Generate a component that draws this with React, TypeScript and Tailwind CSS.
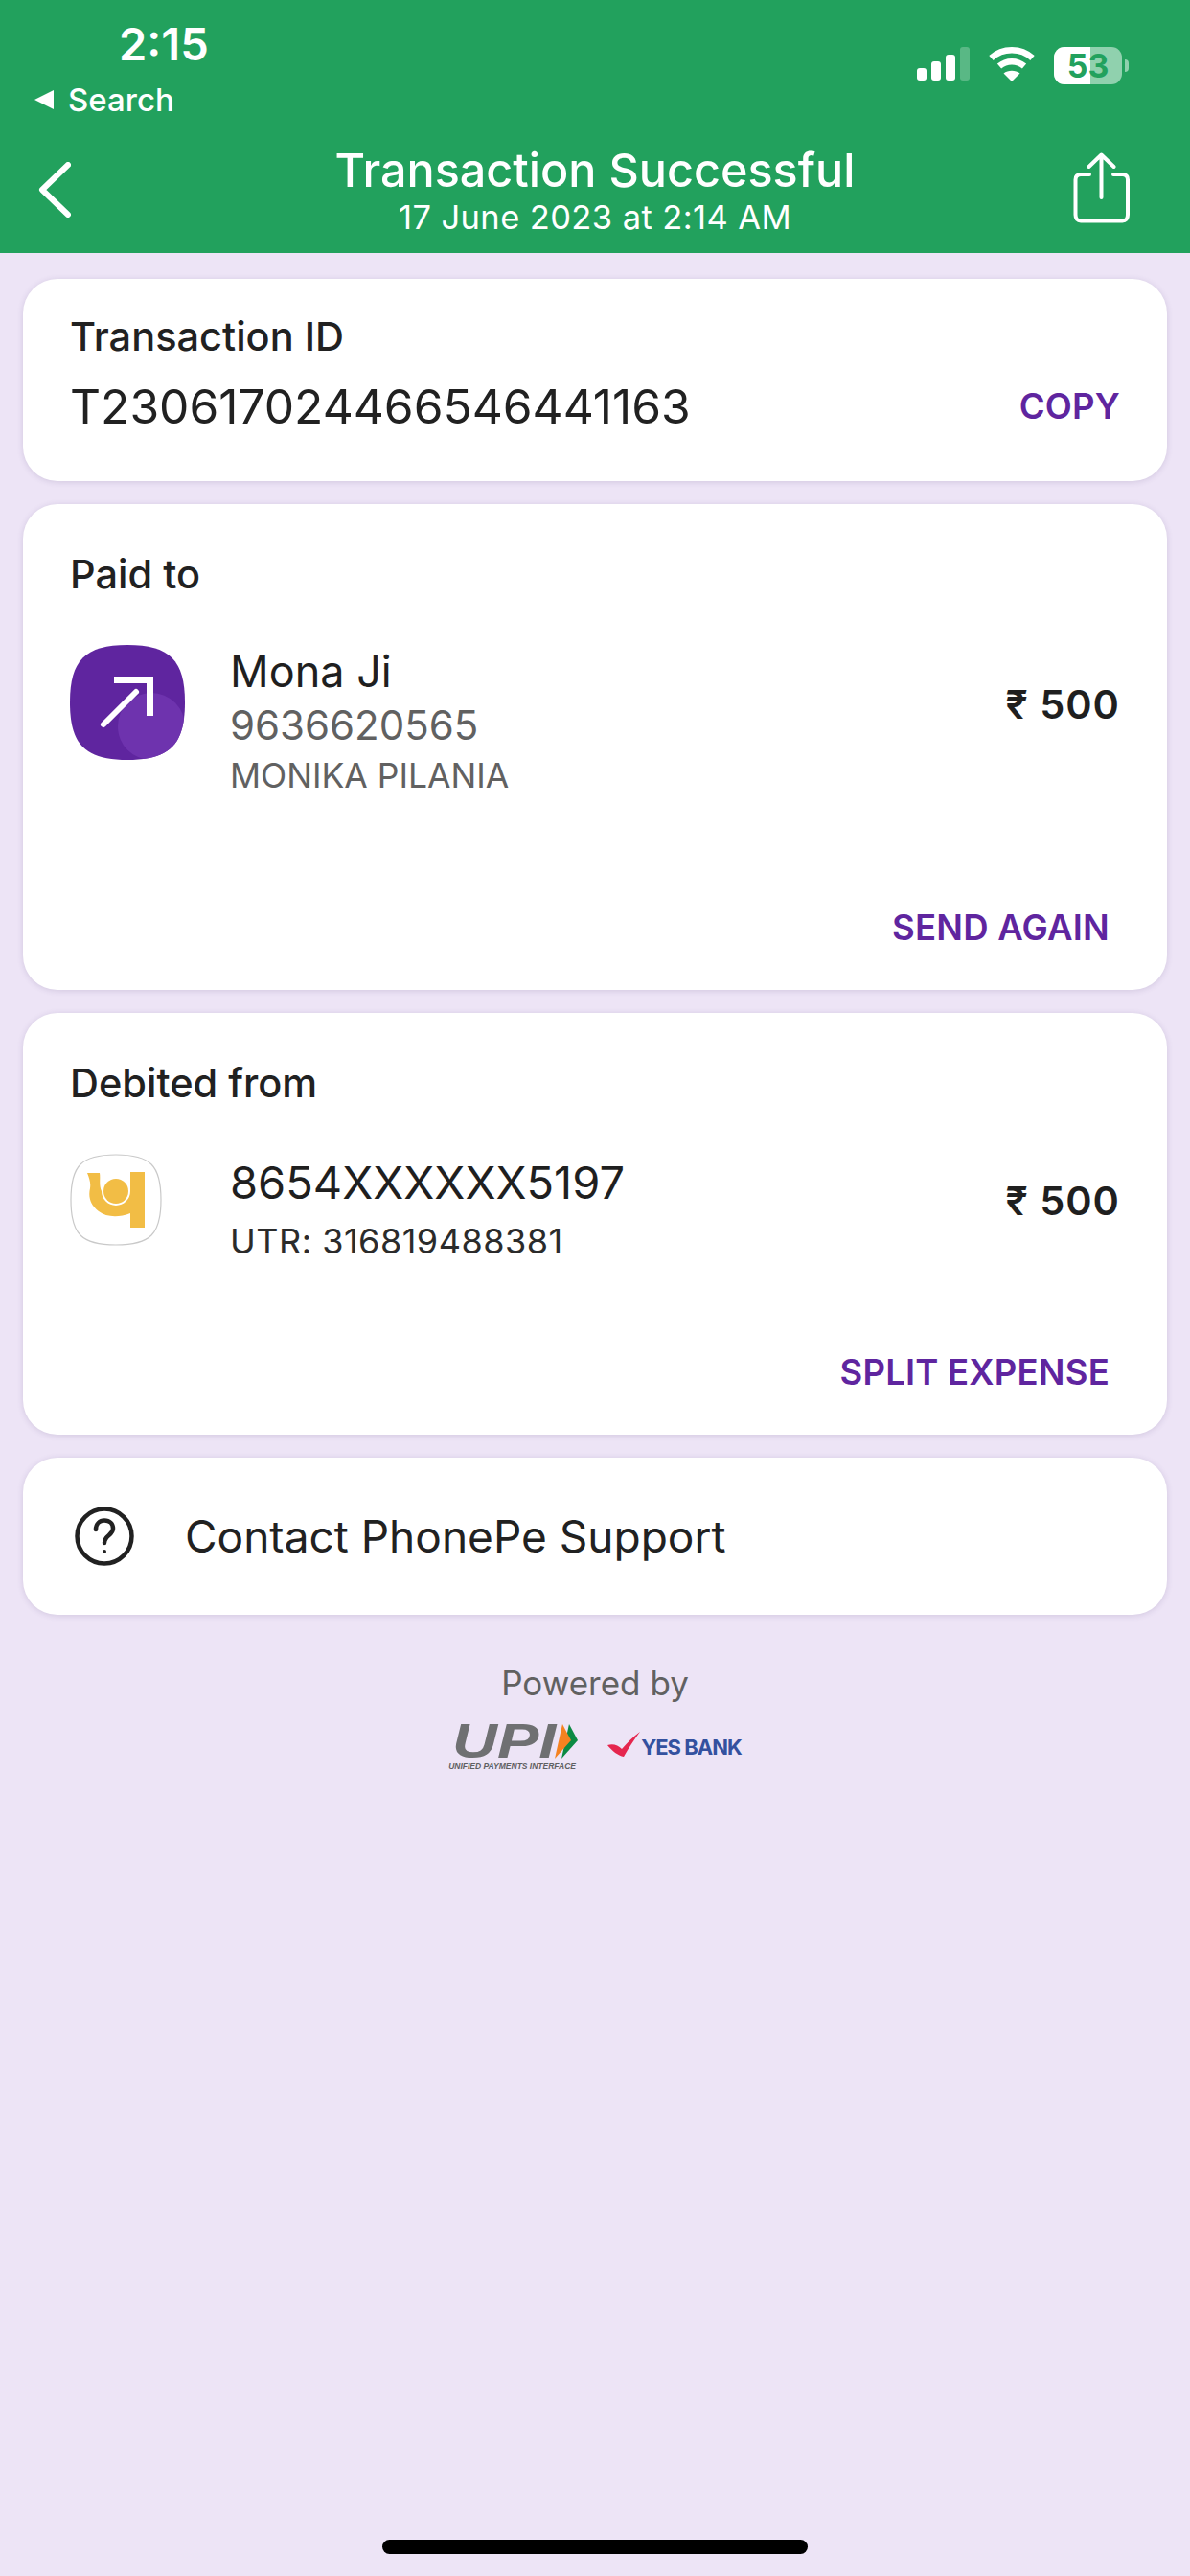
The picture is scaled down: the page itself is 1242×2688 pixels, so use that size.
import React from 'react';

const Card = ({ className = '', children }: { className?: string; children: React.ReactNode }) => (
  <div className={`bg-white rounded-[36px] shadow-[0_1px_6px_rgba(70,50,110,0.16)] ${className}`}>{children}</div>
);

const CardTitle = ({ label }: { label: string }) => (
  <div className="text-[41.500px] leading-[46px] font-medium text-[#212121]">{label}</div>
);

const ActionLink = ({ label }: { label: string }) => (
  <span className="text-[36.500px] leading-[44px] font-semibold tracking-[0.2px] text-[#5f259f]">{label}</span>
);

const Amount = () => (
  <span className="text-[41.500px] leading-[50px] font-semibold tracking-[1px] text-[#1f1f1f]">₹ 500</span>
);

// Status bar icons
const Signal = () => (
  <svg width="55" height="35" viewBox="0 0 55 35" fill="#fff">
    <rect x="0" y="22" width="10" height="13" rx="3" />
    <rect x="15" y="15" width="10" height="20" rx="3" />
    <rect x="30" y="8" width="10" height="27" rx="3" />
    <rect x="45" y="0" width="10" height="35" rx="3" opacity="0.25" />
  </svg>
);

const Wifi = () => (
  <svg width="48" height="36" viewBox="0 0 48 36" fill="none" stroke="#fff" strokeWidth="6.5">
    <path d="M2.5 11.5C14.5 0.5 33.5 0.5 45.5 11.5" />
    <path d="M11 20C18.5 13.5 29.5 13.5 37 20" />
    <path d="M24 36L15.5 27.5C20 23.8 28 23.8 32.5 27.5Z" fill="#fff" stroke="none" />
  </svg>
);

const Battery = () => (
  <div className="flex items-center gap-[3px]">
    <div className="relative w-[71px] h-[39px] rounded-[11px] bg-[#90d1ae] overflow-hidden">
      <div className="absolute inset-y-0 left-0 w-[38px] bg-white" />
      <span className="absolute inset-0 flex items-center justify-center text-[34px] font-bold text-[#22a15d]">53</span>
    </div>
    <div className="w-[4px] h-[13px] rounded-r-[4px] bg-[#90d1ae]" />
  </div>
);

const ShareIcon = () => (
  <svg width="60" height="74" viewBox="0 0 60 74" fill="none" stroke="#fff" strokeWidth="4" strokeLinecap="round" strokeLinejoin="round">
    <path d="M29.5 47V3M16.5 15L29.5 2.5L42.5 15" />
    <path d="M17 23H8C4.5 23 2.5 25 2.5 28.500V65C2.500 69 4.500 71.500 8 71.500H51.500C55 71.500 57 69 57 65V28.500C57 25 55 23 51.500 23H42" />
  </svg>
);

const PaidIcon = () => (
  <svg className="shrink-0" width="120" height="120" viewBox="0 0 120 120">
    <defs>
      <clipPath id="squircle">
        <path d="M60 0C104 0 120 16 120 60C120 104 104 120 60 120C16 120 0 104 0 60C0 16 16 0 60 0Z" />
      </clipPath>
    </defs>
    <g clipPath="url(#squircle)">
      <rect width="120" height="120" fill="#5f259f" />
      <circle cx="85" cy="85" r="35" fill="#6e33ae" />
    </g>
    <path d="M46 36.500H83.500V74" fill="none" stroke="#fff" strokeWidth="7" />
    <path d="M35 83L69 49" fill="none" stroke="#fff" strokeWidth="6" strokeLinecap="round" />
  </svg>
);

const PnbIcon = () => (
  <div className="w-[96px] h-[96px] shrink-0">
    <svg width="96" height="96" viewBox="0 0 96 96">
      <path d="M48 1C84 1 95 12 95 48C95 84 84 95 48 95C12 95 1 84 1 48C1 12 12 1 48 1Z" fill="#fff" stroke="#c9c9c9" strokeWidth="1.200" />
      <path d="M18 20H31C32 26 30 33 33 39A15 15 0 0 0 63 39V19H78V77H63V62C50 67 38 66 30 60C21 53 19 45 21 36C22 30 20 25 18 20Z" fill="#f2bd45" />
      <circle cx="48" cy="39" r="13" fill="#f2bd45" />
    </svg>
  </div>
);

const UpiLogo = () => (
  <div className="flex flex-col w-[135px]">
    <div className="flex items-start h-[36px] pl-[4px]">
      <span className="w-[107px] origin-left scale-x-[1.3] text-[50px] leading-[36px] font-bold italic text-[#6f7072] font-['Liberation_Sans',sans-serif]">UPI</span>
      <svg width="24" height="36" viewBox="0 0 24 36">
        <path d="M15 0L24 17L7 36Z" fill="#0b8a43" />
        <path d="M8 0L17 17L0 36Z" fill="#f58220" />
      </svg>
    </div>
    <span className="mt-[3px] whitespace-nowrap text-[8.500px] leading-[10px] font-semibold italic text-[#5f6062] font-['Liberation_Sans',sans-serif]">UNIFIED PAYMENTS INTERFACE</span>
  </div>
);

const YesBankLogo = () => (
  <div className="flex items-end">
    <svg width="35" height="26" viewBox="0 0 35 26">
      <path d="M0 14C6 12 11 14 15 18C21 11 27 5 34 0C28 8 22 17 17 26C11 25 5 20 0 14Z" fill="#e5264e" />
    </svg>
    <span className="text-[22px] leading-[20px] font-bold tracking-[-1px] text-[#34519f] whitespace-nowrap">YES BANK</span>
  </div>
);

export default function App() {
  return (
    <div className="relative w-[1242px] h-[2688px] bg-[#ede4f6] font-['Inter',sans-serif] text-[#1f1f1f] overflow-hidden">
      {/* Green header */}
      <div className="h-[264px] bg-[#22a15d] text-white">
        <div className="flex justify-between h-[125px] pl-[36px] pr-[64px]">
          <div className="flex flex-col">
            <span className="mt-[20px] ml-[88px] text-[47px] leading-[52px] font-semibold">2:15</span>
            <div className="flex items-center gap-[15px] mt-[12px]">
              <span className="w-0 h-0 border-y-[10px] border-y-transparent border-r-[20px] border-r-white" />
              <span className="text-[33px] leading-[40px] font-medium">Search</span>
            </div>
          </div>
          <div className="flex items-start gap-[20px] pt-[49px]">
            <Signal />
            <Wifi />
            <Battery />
          </div>
        </div>
        <div className="grid grid-cols-[1fr_auto_1fr] items-start h-[139px] px-[40px]">
          <svg className="mt-[44px]" width="34" height="58" viewBox="0 0 34 58" fill="none" stroke="#fff" strokeWidth="6" strokeLinecap="round" strokeLinejoin="round">
            <path d="M31 3L4 29L31 55" />
          </svg>
          <div className="flex flex-col items-center">
            <span className="text-[48.500px] leading-[58px] font-medium mt-[24px]">Transaction Successful</span>
            <span className="text-[34.500px] leading-[40px] tracking-[0.4px]">17 June 2023 at 2:14 AM</span>
          </div>
          <div className="mt-[34px] mr-[22px] justify-self-end">
            <ShareIcon />
          </div>
        </div>
      </div>

      {/* Cards */}
      <div className="flex flex-col gap-[24px] px-[24px] pt-[27px]">
        <Card className="h-[211px] pl-[49px] pr-[49px] pt-[37px]">
          <CardTitle label="Transaction ID" />
          <div className="flex items-center justify-between mt-[20px]">
            <span className="text-[49.700px] leading-[60px] text-[#212121]">T230617024466546441163</span>
            <ActionLink label="COPY" />
          </div>
        </Card>

        <Card className="h-[507px] pl-[49px] pr-[49px] pt-[50px] flex flex-col">
          <CardTitle label="Paid to" />
          <div className="flex items-start mt-[51px]">
            <PaidIcon />
            <div className="flex flex-col ml-[47px] flex-1">
              <span className="text-[45px] leading-[56px] text-[#1f1f1f]">Mona Ji</span>
              <span className="text-[42px] leading-[50px] mt-[3px] text-[#616161]">9636620565</span>
              <span className="text-[35.500px] leading-[42px] mt-[7px] text-[#616161]">MONIKA PILANIA</span>
            </div>
            <div className="mt-[37px]">
              <Amount />
            </div>
          </div>
          <div className="mt-auto mb-[43px] pr-[11px] text-right">
            <ActionLink label="SEND AGAIN" />
          </div>
        </Card>

        <Card className="h-[440px] pl-[49px] pr-[49px] pt-[50px] flex flex-col">
          <CardTitle label="Debited from" />
          <div className="flex items-start mt-[51px]">
            <PnbIcon />
            <div className="flex flex-col ml-[71px] flex-1">
              <span className="text-[47px] leading-[56px] mt-[2px] text-[#1f1f1f]">8654XXXXXX5197</span>
              <span className="text-[36px] leading-[44px] mt-[11px] tracking-[0.5px] text-[#2b2b2b]">UTR: 316819488381</span>
            </div>
            <div className="mt-[24px]">
              <Amount />
            </div>
          </div>
          <div className="mt-auto mb-[43px] pr-[11px] text-right">
            <ActionLink label="SPLIT EXPENSE" />
          </div>
        </Card>

        <Card className="h-[164px] pl-[53px] flex items-center gap-[52px]">
          <svg width="64" height="64" viewBox="0 0 64 64" fill="none" stroke="#212121" strokeWidth="4.500" strokeLinecap="round">
            <circle cx="32" cy="32" r="28.500" />
            <path d="M23 25C23 19 27 15.500 32 15.500C37.500 15.500 41 19 41 24C41 31 32 31 32 39" />
            <circle cx="32" cy="48" r="2" fill="#212121" stroke="none" />
          </svg>
          <span className="text-[46px] leading-[56px] text-[#212121]">Contact PhonePe Support</span>
        </Card>
      </div>

      {/* Powered by */}
      <div className="flex flex-col items-center mt-[50px]">
        <span className="text-[35px] leading-[42px] text-[#616161]">Powered by</span>
        <div className="flex items-start gap-[31px] mt-[22px]">
          <UpiLogo />
          <div className="mt-[8px]">
            <YesBankLogo />
          </div>
        </div>
      </div>

      <div className="absolute left-[399px] top-[2650px] w-[444px] h-[15px] rounded-full bg-black" />
    </div>
  );
}
